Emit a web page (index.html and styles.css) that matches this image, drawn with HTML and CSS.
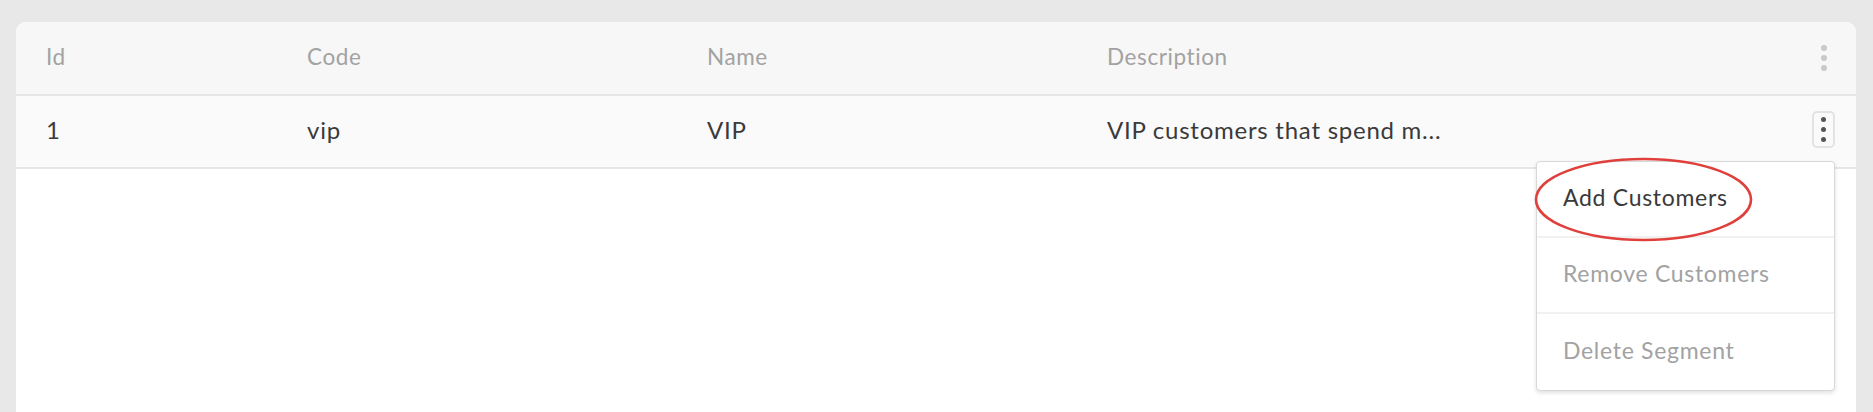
FILE: index.html
```html
<!DOCTYPE html>
<html lang="en">
<head>
<meta charset="utf-8">
<title>Segments</title>
<link rel="stylesheet" href="styles.css">
</head>
<body>
<div class="page">
  <div class="card">
    <div class="grid head">
      <div class="cell">Id</div>
      <div class="cell">Code</div>
      <div class="cell">Name</div>
      <div class="cell">Description</div>
      <div class="cell actions">
        <span class="kebab light"><i></i><i></i><i></i></span>
      </div>
    </div>
    <div class="grid row">
      <div class="cell">1</div>
      <div class="cell">vip</div>
      <div class="cell">VIP</div>
      <div class="cell">VIP customers that spend m...</div>
      <div class="cell actions">
        <div class="dropdown">
          <button class="kebab-btn" type="button"><span class="kebab dark"><i></i><i></i><i></i></span></button>
          <div class="menu">
            <div class="item active">Add Customers</div>
            <div class="item">Remove Customers</div>
            <div class="item">Delete Segment</div>
            <svg class="ring" viewBox="0 0 221 87" width="221" height="87" aria-hidden="true">
              <ellipse cx="110.5" cy="43.5" rx="107.5" ry="40.5" fill="none" stroke="#e0403c" stroke-width="2.6"/>
            </svg>
          </div>
        </div>
      </div>
    </div>
  </div>
</div>
</body>
</html>
```
FILE: styles.css
```css
* { box-sizing: border-box; }
html, body { margin: 0; padding: 0; }
body {
  background: #e8e8e8;
  font-family: "Lato", "Noto Sans", sans-serif;
  font-weight: 400;
  font-size: 24px;
  color: #3a3a3a;
  height: 412px;
  overflow: hidden;
}
.page {
  padding: 22px 17px 0 16px;
}
.card {
  background: #ffffff;
  border-radius: 10px 10px 0 0;
  min-height: 400px;
}
.grid {
  display: grid;
  grid-template-columns: 261px 400px 400px 1fr 80px;
  align-items: center;
}
.head {
  height: 74px;
  background: #f7f7f7;
  border-bottom: 2px solid #e6e6e6;
  border-radius: 10px 10px 0 0;
  color: #a2a2a2;
  font-size: 22.5px;
  letter-spacing: 0.6px;
}
.row {
  height: 73px;
  background: #fafafa;
  border-bottom: 2px solid #e6e6e6;
  letter-spacing: 0.75px;
}
.cell {
  padding-left: 30px;
  padding-bottom: 4px;
  white-space: nowrap;
}
.actions {
  padding-left: 0;
  padding-bottom: 0;
  padding-right: 21px;
  display: flex;
  justify-content: flex-end;
  letter-spacing: normal;
}
.kebab {
  display: flex;
  flex-direction: column;
  gap: 4px;
  align-items: center;
}
.kebab i {
  display: block;
  border-radius: 50%;
}
.kebab.light { width: 23px; }
.kebab.light i { width: 6px; height: 6px; background: #c9c9c9; }
.kebab.dark i { width: 5px; height: 5px; background: #555555; }
.kebab.dark { gap: 5px; }
.dropdown {
  position: relative;
}
.kebab-btn {
  width: 23px;
  height: 37px;
  margin: 0 0 4px 0;
  padding: 0;
  border: 2px solid #e3e3e3;
  border-radius: 5px;
  background: #fafafa;
  display: flex;
  align-items: center;
  justify-content: center;
}
.menu {
  position: absolute;
  right: 0;
  top: 50px;
  width: 299px;
  background: #ffffff;
  border: 1px solid #d8d8d8;
  border-radius: 4px;
  box-shadow: 0 2px 4px rgba(0,0,0,0.12);
  z-index: 2;
  font-size: 23px;
  letter-spacing: 0.7px;
}
.item {
  height: 76px;
  display: flex;
  align-items: center;
  padding-left: 26px;
  padding-bottom: 4px;
  color: #a2a2a2;
  border-bottom: 2px solid #f1f1f1;
  white-space: nowrap;
}
.item:last-of-type { border-bottom: none; }
.item.active { color: #3a3a3a; }
.ring {
  position: absolute;
  left: -4px;
  top: -6px;
  pointer-events: none;
}
```
